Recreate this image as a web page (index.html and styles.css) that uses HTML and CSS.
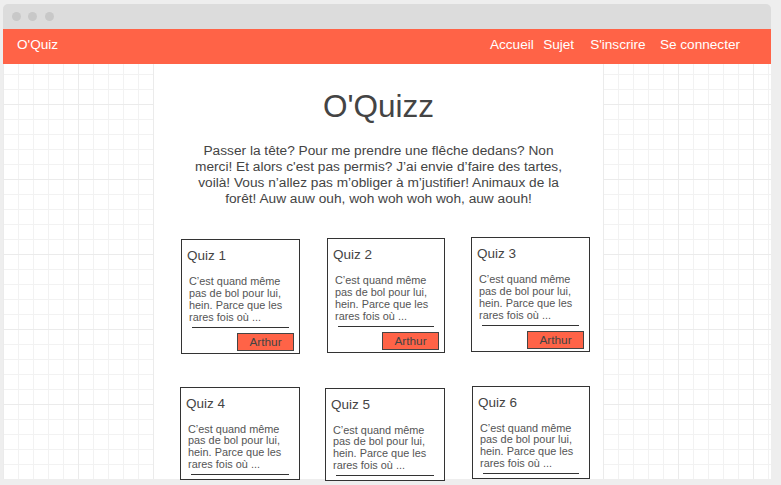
FILE: index.html
```html
<!DOCTYPE html>
<html lang="fr">
<head>
<meta charset="utf-8">
<title>O'Quiz</title>
<link rel="stylesheet" href="styles.css">
</head>
<body>
<div class="window">
  <div class="titlebar">
    <span class="dot"></span><span class="dot"></span><span class="dot"></span>
  </div>
  <header class="header">
    <a class="brand" href="#">O'Quiz</a>
    <nav class="nav">
      <a href="#">Accueil</a>
      <a href="#">Sujet</a>
      <a class="nav-wide" href="#">S'inscrire</a>
      <a class="nav-mid" href="#">Se connecter</a>
    </nav>
  </header>
  <main class="content">
    <div class="page">
      <h1 class="title">O'Quizz</h1>
      <p class="intro">Passer la tête? Pour me prendre une flêche dedans? Non merci! Et alors c'est pas permis? J’ai envie d’faire des tartes, voilà! Vous n’allez pas m’obliger à m’justifier! Animaux de la forêt! Auw auw ouh, woh woh woh woh, auw aouh!</p>
      <div class="cards">
        <div class="card card-1">
          <h2 class="card-title">Quiz 1</h2>
          <p class="card-text">C’est quand même pas de bol pour lui, hein. Parce que les rares fois où ...</p>
          <hr class="card-rule">
          <div class="card-foot"><button class="author">Arthur</button></div>
        </div>
        <div class="card card-2">
          <h2 class="card-title">Quiz 2</h2>
          <p class="card-text">C’est quand même pas de bol pour lui, hein. Parce que les rares fois où ...</p>
          <hr class="card-rule">
          <div class="card-foot"><button class="author">Arthur</button></div>
        </div>
        <div class="card card-3">
          <h2 class="card-title">Quiz 3</h2>
          <p class="card-text">C’est quand même pas de bol pour lui, hein. Parce que les rares fois où ...</p>
          <hr class="card-rule">
          <div class="card-foot"><button class="author">Arthur</button></div>
        </div>
        <div class="card card-4 card-short">
          <h2 class="card-title">Quiz 4</h2>
          <p class="card-text">C’est quand même pas de bol pour lui, hein. Parce que les rares fois où ...</p>
          <hr class="card-rule">
        </div>
        <div class="card card-5 card-short">
          <h2 class="card-title">Quiz 5</h2>
          <p class="card-text">C’est quand même pas de bol pour lui, hein. Parce que les rares fois où ...</p>
          <hr class="card-rule">
        </div>
        <div class="card card-6 card-short">
          <h2 class="card-title">Quiz 6</h2>
          <p class="card-text">C’est quand même pas de bol pour lui, hein. Parce que les rares fois où ...</p>
          <hr class="card-rule">
        </div>
      </div>
    </div>
  </main>
</div>
</body>
</html>
```

FILE: styles.css
```css
* { box-sizing: border-box; }

html, body {
  margin: 0;
  padding: 0;
}

body {
  background: #eeeeee;
  font-family: "Liberation Sans", Arial, sans-serif;
  color: #444;
  width: 781px;
  height: 485px;
  overflow: hidden;
}

.window {
  margin: 4px 0 0 3px;
  width: 768px;
  height: 475px;
  display: flex;
  flex-direction: column;
  border-radius: 5px 5px 0 0;
}

.titlebar {
  height: 25px;
  flex: none;
  background: #dcdcdc;
  border-radius: 5px 5px 0 0;
  display: flex;
  align-items: center;
  gap: 7.5px;
  padding-left: 8.5px;
}

.dot {
  width: 9px;
  height: 9px;
  border-radius: 50%;
  background: #c8c8c8;
}

.header {
  height: 35px;
  flex: none;
  background: #ff6347;
  display: flex;
  align-items: center;
  justify-content: space-between;
  padding: 0 31px 4px 14px;
  font-size: 13.6px;
}

.header a {
  color: #ffffff;
  text-decoration: none;
}

.nav {
  display: flex;
  gap: 9.4px;
}

.nav .nav-wide { margin-left: 6.6px; }
.nav .nav-mid { margin-left: 4.9px; }

.content {
  flex: 1;
  min-height: 0;
  background-color: #ffffff;
  background-image:
    linear-gradient(to right, #ebebeb 1px, transparent 1px),
    linear-gradient(to bottom, #ebebeb 1px, transparent 1px),
    linear-gradient(to right, #f2f2f2 1px, transparent 1px),
    linear-gradient(to bottom, #f2f2f2 1px, transparent 1px);
  background-size: 75px 75px, 75px 75px, 15px 15px, 15px 15px;
  background-position: 0 -35px, 0 -35px, 0 -35px, 0 -35px;
}

.page {
  margin-left: 151px;
  width: 449px;
  height: 100%;
  background: #ffffff;
  padding-top: 24px;
}

.title {
  margin: 0;
  font-size: 31.5px;
  line-height: 36px;
  font-weight: normal;
  text-align: center;
  color: #444;
}

.intro {
  width: 380px;
  margin: 19px auto 0;
  font-size: 13.7px;
  line-height: 16.1px;
  text-align: center;
  color: #444;
}

.cards {
  margin: 30px 0 0 27px;
  display: grid;
  grid-template-columns: repeat(3, 119px);
  column-gap: 26px;
  row-gap: 32px;
  align-items: start;
}

.card {
  background: #ffffff;
  border: 1px solid #333;
  padding: 8px 0 2px;
}

.card-short { padding-bottom: 4px; }

.card-1 { margin-top: 2px; }
.card-2 { margin-top: 1px; margin-left: 1px; }
.card-3 { margin-top: 0; }
.card-4 { margin-top: 1px; margin-left: -1px; }
.card-5 { margin-top: 2px; margin-left: -1px; }
.card-6 { margin-top: 0; margin-left: 1px; }

.card-title {
  margin: 0;
  padding: 0 5px;
  font-size: 13.5px;
  line-height: 16px;
  font-weight: normal;
  color: #444;
}

.card-text {
  margin: 12px 0 0;
  padding: 0 7px;
  font-size: 10.9px;
  line-height: 11.8px;
  color: #555;
}

.card-rule {
  margin: 3px 10px 0;
  border: 0;
  height: 1px;
  background: #333;
}

.card-foot {
  display: flex;
  justify-content: flex-end;
  padding: 5px 5px 0 0;
}

.author {
  width: 57px;
  height: 18px;
  padding: 0;
  border: 1px solid #444;
  background: #ff6347;
  color: #444;
  font-family: "Liberation Sans", Arial, sans-serif;
  font-size: 11.8px;
  line-height: 16px;
  text-align: center;
}
```
